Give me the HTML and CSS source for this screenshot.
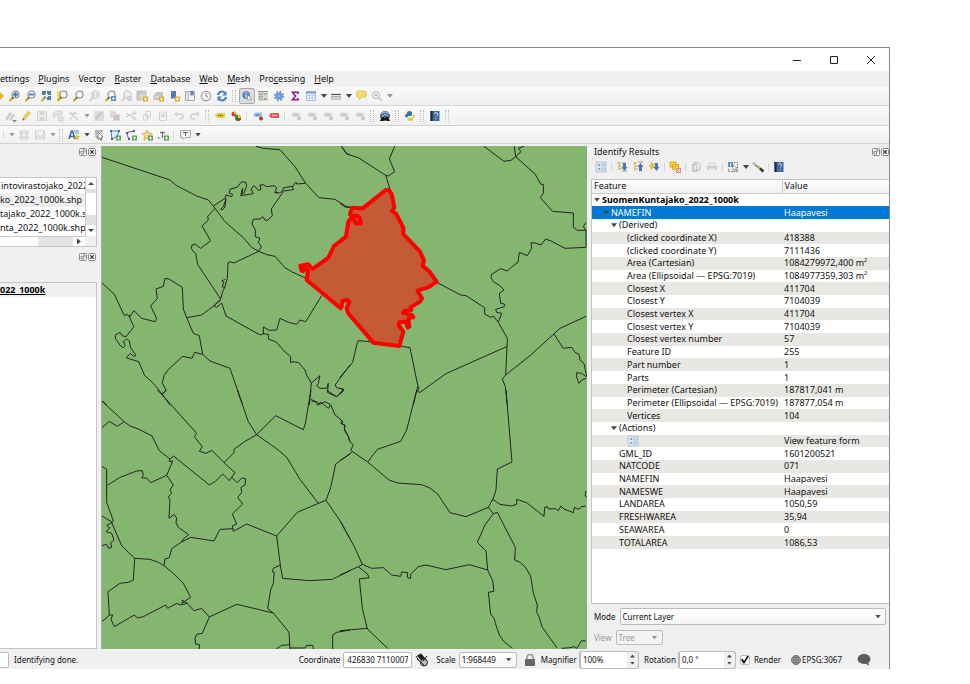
FILE: index.html
```html
<!DOCTYPE html>
<html lang="en">
<head>
<meta charset="utf-8">
<title>QGIS</title>
<link rel="stylesheet" href="styles.css">
</head>
<body>
<svg class="sprite" aria-hidden="true">
  <symbol id="lens" viewBox="0 0 16 16"><path d="M7 9.5 3.5 13" stroke="#c9a51c" stroke-width="2"/><path d="M7.5 9 6 10.5" stroke="#444" stroke-width="1.6"/><circle cx="9.5" cy="6.5" r="3.5" fill="#f3f5f7" stroke="#888" stroke-width="1.1"/></symbol>
  <symbol id="lens-off" viewBox="0 0 16 16"><path d="M7 9.5 3.5 13" stroke="#d3cfc4" stroke-width="2"/><circle cx="9.5" cy="6.5" r="3.5" fill="#f1f1f1" stroke="#c6c6c6" stroke-width="1.1"/></symbol>
  <symbol id="pan" viewBox="0 0 16 16"><path d="M6 8 9 5v6z" fill="#4a7ab5"/><path d="M14 8 10 4v2.5H7v3h3V12z" fill="#e6b422"/></symbol>
  <symbol id="zin" viewBox="0 0 16 16"><use href="#lens"/><path d="M7 6.5h5M9.5 4v5" stroke="#4d78ad" stroke-width="1.8"/></symbol>
  <symbol id="zout" viewBox="0 0 16 16"><use href="#lens"/><path d="M7 6.5h5" stroke="#4d78ad" stroke-width="1.8"/></symbol>
  <symbol id="full" viewBox="0 0 16 16"><path d="M7 9.5 3.5 13" stroke="#c9a51c" stroke-width="2"/><path d="M4 3h4v4H4zM9 3h4v4H9zM9 8h4v4H9zM6 8h2v2H6z" fill="#5079a8"/><circle cx="8.5" cy="7.5" r="2" fill="#dfe7ef"/></symbol>
  <symbol id="zsel" viewBox="0 0 16 16"><path d="M3 3h7v8H3z" fill="#f4de55"/><use href="#lens"/></symbol>
  <symbol id="z11" viewBox="0 0 16 16"><use href="#lens-off"/><path d="M8 5v3m3-3v3" stroke="#bbb"/></symbol>
  <symbol id="zlast" viewBox="0 0 16 16"><use href="#lens"/><path d="M9 8h5v5H9z" fill="#5c8bc4"/><path d="M13 10.5h-3m1.5-1.5v3" stroke="#fff"/></symbol>
  <symbol id="znext" viewBox="0 0 16 16"><use href="#lens-off"/><path d="M9 8h5v5H9z" fill="#d4d4d4"/></symbol>
  <symbol id="plus" viewBox="0 0 16 16"><path d="M9 8.5h5v5H9z" fill="#d8b021"/><path d="M10 11h3m-1.5-1.5v3" stroke="#fff"/></symbol>
  <symbol id="map" viewBox="0 0 16 16"><path d="M3 3h9v9H3z" fill="#d9d8d4" stroke="#bbb"/><path d="M5 3v9M3 5h9" stroke="#bbb"/><use href="#plus"/></symbol>
  <symbol id="map3d" viewBox="0 0 16 16"><path d="m3 9 3-5h7v5l-3 3H4z" fill="#c6c5c1"/><path d="M5 9h6" stroke="#eee"/><use href="#plus"/></symbol>
  <symbol id="bookmark" viewBox="0 0 16 16"><path d="M5 3h5v9l-2.500-2L5 11z" fill="#4f7eb5"/><use href="#plus"/></symbol>
  <symbol id="bookmarks" viewBox="0 0 16 16"><path d="M3.500 3.500h9v9h-9z" fill="#f1f1f1" stroke="#aaa"/><path d="M6 3v9" stroke="#aaa"/><path d="M8.500 3h3v5L10 7 8.500 8z" fill="#5780ad"/></symbol>
  <symbol id="clock" viewBox="0 0 16 16"><circle cx="8" cy="8" r="4.600" fill="#f5f5f5" stroke="#999" stroke-width="1.100"/><path d="M8 5v3l2 1" stroke="#888" fill="none"/></symbol>
  <symbol id="refresh" viewBox="0 0 16 16"><path d="M4 7a4 4 0 0 1 7-2M12 9a4 4 0 0 1-7 2" fill="none" stroke="#4383c4" stroke-width="2"/><path d="M12.500 3v4.500H8zM3.500 13V8.500H8z" fill="#4383c4"/></symbol>
  <symbol id="identify" viewBox="0 0 16 16"><circle cx="7" cy="7" r="4.300" fill="#5587be"/><path d="M7 6.500V10M7 4v1.300" stroke="#fff" stroke-width="1.300"/><path d="m8.500 7 5 3.500-2 .5 1.500 2-1 .7-1.500-2-1.500 1.500z" fill="#fff" stroke="#777" stroke-width=".6"/></symbol>
  <symbol id="abacus" viewBox="0 0 16 16"><path d="M3 3h10v10H3z" fill="#d9d9d6"/><path d="M3 3.500h10" stroke="#8d8d8d"/><path d="M4 6h4m1 5h3" stroke="#cf7070" stroke-width="1.500" stroke-dasharray="1.500 .7"/><path d="M4 8.500h4m1-2.500h3M4 11h4" stroke="#6fa67a" stroke-width="1.500" stroke-dasharray="1.500 .7"/></symbol>
  <symbol id="gear" viewBox="0 0 16 16"><circle cx="8" cy="8" r="4.200" fill="none" stroke="#6c98c9" stroke-width="2" stroke-dasharray="1.800 1.500"/><circle cx="8" cy="8" r="3.600" fill="#6f9ccd"/><circle cx="8" cy="8" r="1.200" fill="#8fb3da"/></symbol>
  <symbol id="sigma" viewBox="0 0 16 16"><path d="M11 6V4.200H5.500L8.500 8l-3 3.800H11V10" fill="none" stroke="#94158f" stroke-width="1.600"/></symbol>
  <symbol id="table" viewBox="0 0 16 16"><path d="M3.500 3.500h9v9h-9z" fill="#eef4fa" stroke="#a9c1db"/><path d="M3 4.500h10" stroke="#6e9bcc" stroke-width="2"/><path d="M6.500 4v8M9.500 4v8M3 7.500h10M3 10h10" stroke="#b3c8df" stroke-width=".8"/></symbol>
  <symbol id="ruler" viewBox="0 0 16 16"><path d="M3 6.500h10" stroke="#555" stroke-width="1.200"/><path d="M3.500 8.500h9V11h-9z" fill="#ddd" stroke="#aaa"/></symbol>
  <symbol id="tip" viewBox="0 0 16 16"><path d="M4 3h8q1.500 0 1.500 1.500v3Q13.500 9 12 9H9l-3 3 .5-3H4.500Q3.500 9 3.500 7.500v-3Q3.500 3 5 3z" fill="#f1da6d" stroke="#d9bf55" stroke-width=".7"/></symbol>
  <symbol id="lensgear" viewBox="0 0 16 16"><circle cx="7" cy="7" r="3.500" fill="#eee" stroke="#ccc" stroke-width="1.500"/><circle cx="7" cy="7" r="1.300" fill="#bbb"/><path d="m9.500 9.500 3 3" stroke="#ccc" stroke-width="2"/></symbol>
  <symbol id="pencils" viewBox="0 0 16 16"><path d="m3 11 5-7 2 1.500-5 7zM7 12l4-6 2 1.500-4 5z" fill="#c9c9c9"/><path d="M10 12h5l-2.500 2.500z" fill="#888"/></symbol>
  <symbol id="pencil" viewBox="0 0 16 16"><path d="m4.500 12.500.8-3.300 5-6 2.200 1.800-5 6z" fill="#ead35f" stroke="#c4ad48" stroke-width=".6"/><path d="m4.500 12.500.5-2 1.500 1z" fill="#555"/></symbol>
  <symbol id="save-off" viewBox="0 0 16 16"><path d="M3.500 3.500h9v9h-9z" fill="#eee" stroke="#d2d2d2"/><path d="M5.500 4h5v3h-5zm0 5h5v3.500h-5z" fill="#d5d5d5"/></symbol>
  <symbol id="poly-off" viewBox="0 0 16 16"><path d="m3 6 3-3h6v4H7l-3 3zM8 9h5v4H8z" fill="#e4e4e4" stroke="#d0d0d0"/></symbol>
  <symbol id="node-off" viewBox="0 0 16 16"><path d="m4 12 5-8M4 4l8 8M3 5.500h9" stroke="#cfcfcf" stroke-width="1.200"/></symbol>
  <symbol id="edit-off" viewBox="0 0 16 16"><path d="M3 3h10v10H3z" fill="#dedddb"/><path d="m5 11 6-7" stroke="#c9c6be" stroke-width="2"/></symbol>
  <symbol id="trash-off" viewBox="0 0 16 16"><path d="M3 3h6v3h4v7H6v-3H3z" fill="#ddd7d6"/><path d="M7 7h5v5H7z" fill="#cbc2c0"/></symbol>
  <symbol id="cut-off" viewBox="0 0 16 16"><path d="m3 5 8 5M3 9l8-4" stroke="#c9c9c9"/><circle cx="11.500" cy="10.500" r="1.300" fill="none" stroke="#c9c9c9"/><circle cx="11.500" cy="5" r="1.300" fill="none" stroke="#c9c9c9"/></symbol>
  <symbol id="copy-off" viewBox="0 0 16 16"><path d="M7 3.500h4.500V9H7zM4.500 6.500H9V12H4.500z" fill="#f4f4f4" stroke="#d2d2d2"/></symbol>
  <symbol id="paste-off" viewBox="0 0 16 16"><path d="M4.500 4h7v8.500h-7z" fill="#f4f4f4" stroke="#d2d2d2"/><path d="M6 6h4v3H6z" fill="#d5d5d5"/></symbol>
  <symbol id="undo-off" viewBox="0 0 16 16"><path d="M5 6h4.500a2.500 2.500 0 0 1 0 5H8" fill="none" stroke="#d2d2d2" stroke-width="1.600"/><path d="M6.500 3v6L3 6z" fill="#d2d2d2"/></symbol>
  <symbol id="redo-off" viewBox="0 0 16 16"><path d="M11 6H6.500a2.500 2.500 0 0 0 0 5H8" fill="none" stroke="#d2d2d2" stroke-width="1.600"/><path d="M9.500 3v6L13 6z" fill="#d2d2d2"/></symbol>
  <symbol id="label" viewBox="0 0 16 16"><path d="m3 7.500 2-2.500h8v5H5z" fill="#f2d23a"/><path d="M6 7.500h5" stroke="#7b6820" stroke-width="1.500" stroke-dasharray="1.300 .5"/></symbol>
  <symbol id="diagram" viewBox="0 0 16 16"><circle cx="6" cy="6" r="2.500" fill="#e63a24"/><path d="M6 6V3.500A2.500 2.500 0 0 1 8.500 6z" fill="#f2cf2e"/><circle cx="10" cy="10" r="3" fill="#24852e"/><path d="M10 10V7a3 3 0 0 1 3 3z" fill="#f2cf2e"/><path d="m10 10 3 0a3 3 0 0 1-2 3z" fill="#d22"/></symbol>
  <symbol id="label-pin" viewBox="0 0 16 16"><path d="m3 7 2-2.500h7v4.500H5z" fill="#a4c1e4"/><path d="M5.500 7h4" stroke="#46658d"/><circle cx="11" cy="10.500" r="2" fill="#bd3333"/></symbol>
  <symbol id="label-red" viewBox="0 0 16 16"><path d="m3 7.500 2-2.500h8v5H5z" fill="#f0514f"/><path d="M6 7.500h5" stroke="#ffd9d9" stroke-width="1.500" stroke-dasharray="1.300 .5"/></symbol>
  <symbol id="label-off" viewBox="0 0 16 16"><path d="m3 7 2-2.500h7v4.500H5z" fill="#dcdad6"/><path d="M5.500 7h4" stroke="#b8b8b8"/><circle cx="11" cy="10.500" r="2" fill="#c9c7c3"/></symbol>
  <symbol id="globe-dark" viewBox="0 0 16 16"><circle cx="8" cy="8" r="5" fill="#4b678c"/><path d="M4 6q4-4 8 0M5 9l3-3 3 2" fill="none" stroke="#b5c9de"/><path d="m3 13 2-4h2l1 2 1-2h2l2 4h-3l-1-1H8l-2 1z" fill="#171717"/></symbol>
  <symbol id="python" viewBox="0 0 16 16"><path d="M5 6V4.500Q5 3 7.500 3T10 4.500V7Q10 8 9 8H6.500Q5.500 8 5.500 9.500H4.500Q3 9.500 3 7.500T5 6z" fill="#3b73a8"/><path d="M11 6.500v1.500q0 1.500-1.500 1.500H7q-1 0-1 1v1Q6 13 8.500 13T11 11.500V10q2 0 2-2t-2-1.500z" fill="#f0c93a"/></symbol>
  <symbol id="help" viewBox="0 0 16 16"><path d="M3.500 3h9v10h-9z" fill="#416a9b"/><path d="M3.500 3h2v10h-2z" fill="#172538"/><path d="M7.500 6q0-1.500 1.500-1.500T10.500 6 9 8.500M9 10v1.200" stroke="#c9d9ea" fill="none"/></symbol>
  <symbol id="grid-off" viewBox="0 0 16 16"><path d="M4 4h3v3H4zM9 4h3v3H9zM4 9h3v3H4zM9 9h3v3H9z" fill="#e6e6e6" stroke="#cfcfcf"/></symbol>
  <symbol id="mesh-off" viewBox="0 0 16 16"><path d="M3.500 4h9v8h-9zl5 7 4-7M3.500 12l3-4m3 0 3 4" fill="none" stroke="#cfcfcf"/></symbol>
  <symbol id="annot" viewBox="0 0 16 16"><path d="m3 12 2.500-8h1L9 12M4 9.500h4" stroke="#35659b" stroke-width="1.500" fill="none"/><path d="M8 4h5M9 6h4" stroke="#5b88ba"/><path d="m11 7 1 2 2 .3-1.500 1.500.5 2.200-2-1-2 1 .5-2.200L8 9.300 10 9z" fill="#e3ba30"/></symbol>
  <symbol id="select" viewBox="0 0 16 16"><path d="M4 4h8M5 4v6M5 10h2M10 3v3" fill="none" stroke="#888"/><path d="m7 5 5 5-2 .3 1 2.500-1.200.5-1-2.300L7 12.500z" fill="#fff" stroke="#555" stroke-width=".8"/></symbol>
  <symbol id="gplus" viewBox="0 0 16 16"><path d="M9 8.500h5v5H9z" fill="#5b9d59"/><path d="M10 11h3m-1.500-1.500v3" stroke="#fff"/></symbol>
  <symbol id="apoly" viewBox="0 0 16 16"><path d="M4 4h8L10 9l-5 3z" fill="#e5eff8" stroke="#5580ae"/><path d="M3 3h2v2H3zM11 3h2v2h-2zM4 11h2v2H4z" fill="#2668b5"/><use href="#gplus"/></symbol>
  <symbol id="aline" viewBox="0 0 16 16"><path d="M12 4 5 5q-2 3 1 7" fill="none" stroke="#666"/><path d="M10 3h2v2h-2zM3 5h2v2H3zM5 11h2v2H5z" fill="#2668b5"/><use href="#gplus"/></symbol>
  <symbol id="astar" viewBox="0 0 16 16"><path d="m8 3 1.500 3 3.500.5L10.500 9l.5 4-3-2-3 2 .5-4L3 6.500 6.500 6z" fill="#f6dc83" stroke="#d9a33c" stroke-width=".8"/><use href="#gplus"/></symbol>
  <symbol id="atext" viewBox="0 0 16 16"><path d="M5 5.500h5M7.500 5.500V11M3 11h1.500" stroke="#777" stroke-width="1.300"/><use href="#gplus"/></symbol>
  <symbol id="atip" viewBox="0 0 16 16"><path d="M3.500 3.500h10v7H8l-2 2v-2H3.500z" fill="#edf1f5" stroke="#aaa"/><path d="M6 5.500h5m-2.500 0V9" stroke="#666" fill="none"/></symbol>
  <symbol id="form" viewBox="0 0 16 16"><path d="M3 3h10v10H3z" fill="#dfe9f3" stroke="#b3c5d8"/><path d="M5 6h2m-2 4h2" stroke="#567"/><path d="M8.500 5h3v2h-3zm0 4h3v2h-3z" fill="#fff" stroke="#8dadcf" stroke-width=".8"/></symbol>
  <symbol id="expand" viewBox="0 0 16 16"><path d="M3 4h4M4.500 7H8M4.500 10H8M5 3v8" stroke="#d3b450" stroke-width="1.200"/><path d="M8 4h4M8 12h5" stroke="#999"/><path d="M9 4h3v4h1.500L10.500 12l-3-4H9z" fill="#4777ae"/></symbol>
  <symbol id="collapse" viewBox="0 0 16 16"><path d="M3 4h4M4.500 7H8M4.500 10H8M5 3v9" stroke="#d3b450" stroke-width="1.200"/><path d="M8 3h5" stroke="#999"/><path d="M9 12h3V8h1.500L10.500 4l-3 4H9z" fill="#4777ae"/></symbol>
  <symbol id="expnew" viewBox="0 0 16 16"><path d="m5.500 3 1 2 2-.5L7.500 7 9 9l-2.500-.5L5 11V8L3 7l2-1z" fill="#f0bd20" stroke="#e2b53a" stroke-width=".8"/><path d="M9 4h3v4h1.500L10.500 12l-3-4H9z" fill="#4777ae"/></symbol>
  <symbol id="clear" viewBox="0 0 16 16"><path d="M3 3h6v5H3zM5.500 5.500h6v5h-6z" fill="#f5d43c" stroke="#dbb01d"/><path d="M9 9h5v5H9z" fill="#dc8a82"/><path d="m10 10 3 3m0-3-3 3" stroke="#fff"/></symbol>
  <symbol id="copy" viewBox="0 0 16 16"><path d="M6 3.500h4l2 2V11H6zM4.500 5.500H9V12.500H4.500z" fill="#f3f3f3" stroke="#aaa" stroke-width=".8"/></symbol>
  <symbol id="print" viewBox="0 0 16 16"><path d="M5 4h6v3H5z" fill="#eee" stroke="#d0d0d0"/><path d="M4 7h8q1 0 1 1v3H3V8q0-1 1-1z" fill="#cfcfcf"/><path d="M5 9.500h6v3H5z" fill="#eee"/></symbol>
  <symbol id="idsel" viewBox="0 0 16 16"><path d="M3 3h5v5H3z" fill="#5b8cc2"/><path d="M5.500 4v3.500" stroke="#fff"/><path d="M9 3.500h3.500v9h-9V9" fill="none" stroke="#777" stroke-dasharray="1.500 1"/><path d="m8 6 4 3-1.500.5 1 2-1 .5-1-2L8 11.500z" fill="#fff" stroke="#777" stroke-width=".7"/></symbol>
  <symbol id="wrench" viewBox="0 0 16 16"><path d="m4 5 4 3" stroke="#888" stroke-width="1.600"/><circle cx="4" cy="4.500" r="1.600" fill="#bbb"/><path d="m7.500 7.500 3 2.500" stroke="#c3b14c" stroke-width="2.600"/><path d="m10 9.500 3.500 3" stroke="#333" stroke-width="2.400"/></symbol>
  <symbol id="float" viewBox="0 0 8 8"><rect x=".5" y=".5" width="7" height="7" rx="1" fill="#f8f8f8" stroke="#888"/><path d="M3.500 2h2.500v2.500M2 3.500h2.500V6H2z" fill="none" stroke="#666" stroke-width=".7"/></symbol>
  <symbol id="close" viewBox="0 0 8 8"><rect x=".5" y=".5" width="7" height="7" rx="1" fill="#f8f8f8" stroke="#888"/><path d="m2.200 2.200 3.600 3.600m0-3.600L2.200 5.800" stroke="#333" stroke-width="1.200"/></symbol>
</svg>

<div class="window">
  <header class="titlebar">
    <button aria-label="Minimize"><svg viewBox="0 0 10 10"><path d="M1 5.500h8"/></svg></button>
    <button aria-label="Maximize"><svg viewBox="0 0 10 10"><path d="M1.500 1.500h7v7h-7z"/></svg></button>
    <button aria-label="Close window"><svg viewBox="0 0 10 10"><path d="m1 1 8 8m0-8L1 9"/></svg></button>
  </header>

  <nav class="menubar">
    <button>ettings</button><button><u>P</u>lugins</button><button>Vect<u>o</u>r</button><button><u>R</u>aster</button><button><u>D</u>atabase</button><button><u>W</u>eb</button><button><u>M</u>esh</button><button>Pro<u>c</u>essing</button><button><u>H</u>elp</button>
  </nav>

  <div class="toolbar first">
    <button aria-label="Pan"><svg><use href="#pan"/></svg></button>
    <button aria-label="Zoom in"><svg><use href="#zin"/></svg></button>
    <button aria-label="Zoom out"><svg><use href="#zout"/></svg></button>
    <button aria-label="Zoom full"><svg><use href="#full"/></svg></button>
    <button aria-label="Zoom to selection"><svg><use href="#zsel"/></svg></button>
    <button aria-label="Zoom to layer"><svg><use href="#lens"/></svg></button>
    <button aria-label="Native resolution"><svg><use href="#z11"/></svg></button>
    <button aria-label="Zoom last"><svg><use href="#zlast"/></svg></button>
    <button aria-label="Zoom next"><svg><use href="#znext"/></svg></button>
    <button aria-label="New map view"><svg><use href="#map"/></svg></button>
    <button aria-label="New 3D map view"><svg><use href="#map3d"/></svg></button>
    <button aria-label="New bookmark"><svg><use href="#bookmark"/></svg></button>
    <button aria-label="Show bookmarks"><svg><use href="#bookmarks"/></svg></button>
    <button aria-label="Temporal controller"><svg><use href="#clock"/></svg></button>
    <button aria-label="Refresh"><svg><use href="#refresh"/></svg></button>
    <i class="handle"></i>
    <button class="on" aria-label="Identify features"><svg><use href="#identify"/></svg></button>
    <button aria-label="Field calculator"><svg><use href="#abacus"/></svg></button>
    <button aria-label="Toolbox"><svg><use href="#gear"/></svg></button>
    <button aria-label="Statistics"><svg><use href="#sigma"/></svg></button>
    <button aria-label="Attribute table"><svg><use href="#table"/></svg></button><i class="drop"></i>
    <button aria-label="Measure"><svg><use href="#ruler"/></svg></button><i class="drop"></i>
    <button aria-label="Map tips"><svg><use href="#tip"/></svg></button>
    <button aria-label="Feature action"><svg><use href="#lensgear"/></svg></button><i class="drop off"></i>
  </div>

  <div class="toolbar second">
    <button aria-label="Current edits"><svg><use href="#pencils"/></svg></button>
    <button aria-label="Toggle editing"><svg><use href="#pencil"/></svg></button>
    <button aria-label="Save edits"><svg><use href="#save-off"/></svg></button>
    <button aria-label="Add feature"><svg><use href="#poly-off"/></svg></button>
    <button aria-label="Vertex tool"><svg><use href="#node-off"/></svg></button><i class="drop off"></i>
    <button aria-label="Modify attributes"><svg><use href="#edit-off"/></svg></button>
    <button aria-label="Delete selected"><svg><use href="#trash-off"/></svg></button>
    <button aria-label="Cut"><svg><use href="#cut-off"/></svg></button>
    <button aria-label="Copy"><svg><use href="#copy-off"/></svg></button>
    <button aria-label="Paste"><svg><use href="#paste-off"/></svg></button>
    <button aria-label="Undo"><svg><use href="#undo-off"/></svg></button>
    <button aria-label="Redo"><svg><use href="#redo-off"/></svg></button>
    <i class="handle"></i>
    <button aria-label="Labeling options"><svg><use href="#label"/></svg></button>
    <button aria-label="Diagram options"><svg><use href="#diagram"/></svg></button>
    <i class="sep"></i>
    <button aria-label="Highlight pinned"><svg><use href="#label-pin"/></svg></button>
    <button aria-label="Unplaced labels"><svg><use href="#label-red"/></svg></button>
    <i class="sep"></i>
    <button aria-label="Pin labels"><svg><use href="#label-off"/></svg></button>
    <button aria-label="Show labels"><svg><use href="#label-off"/></svg></button>
    <button aria-label="Move label"><svg><use href="#label-off"/></svg></button>
    <button aria-label="Rotate label"><svg><use href="#label-off"/></svg></button>
    <button aria-label="Change label"><svg><use href="#label-off"/></svg></button>
    <i class="handle"></i>
    <button aria-label="MetaSearch"><svg><use href="#globe-dark"/></svg></button>
    <i class="handle"></i>
    <button aria-label="Python console"><svg><use href="#python"/></svg></button>
    <i class="handle"></i>
    <button aria-label="Help contents"><svg><use href="#help"/></svg></button>
    <i class="handle"></i>
  </div>

  <div class="toolbar third">
    <i class="sep"></i><i class="drop off"></i>
    <button aria-label="Tiles"><svg><use href="#grid-off"/></svg></button>
    <button aria-label="Mesh digitizing"><svg><use href="#mesh-off"/></svg></button><i class="drop off"></i>
    <i class="handle"></i>
    <button aria-label="New annotation layer"><svg><use href="#annot"/></svg></button><i class="drop"></i>
    <button aria-label="Modify annotations"><svg><use href="#select"/></svg></button>
    <button aria-label="Polygon annotation"><svg><use href="#apoly"/></svg></button>
    <button aria-label="Line annotation"><svg><use href="#aline"/></svg></button>
    <button aria-label="Marker annotation"><svg><use href="#astar"/></svg></button>
    <button aria-label="Text annotation"><svg><use href="#atext"/></svg></button>
    <i class="sep"></i>
    <button aria-label="Text balloon"><svg><use href="#atip"/></svg></button><i class="drop"></i>
  </div>

  <main class="work">
    <aside class="left">
      <div class="dockhead"><button aria-label="Float browser"><svg><use href="#float"/></svg></button><button aria-label="Close browser"><svg><use href="#close"/></svg></button></div>
      <div class="browser">
        <ul class="files"><li class="indent">intovirastojako_2022</li><li class="picked">ko_2022_1000k.shp</li><li>tajako_2022_1000k.shp</li><li>nta_2022_1000k.shp</li></ul>
        <div class="vbar"><i class="up"></i><i class="vthumb"></i><i class="down"></i></div>
        <div class="hbar"><i class="hthumb"></i><i class="next"></i></div>
        <div class="corner"></div>
      </div>
      <div class="dockhead lower"><button aria-label="Float layers"><svg><use href="#float"/></svg></button><button aria-label="Close layers"><svg><use href="#close"/></svg></button></div>
      <ul class="layers"><li>022_1000k</li></ul>
    </aside>

    <svg class="canvas" viewBox="102 146 485 503" preserveAspectRatio="xMidYMid slice" role="img" aria-label="Municipality map">
      <g class="border" transform="translate(100 145) scale(.33333)">
        <path d="M0 35 210 105 230 122 290 153 325 165 340 183 375 230 430 278 455 307 476 319 500 329 525 334 555 368 575 380 618 400M468 4 490 10 540 14 585 65 617 115 657 158 705 163 738 184 750 187M724 4 742 28 750 28"/>
        <path d="M340 183 375 160 378 150 395 155 398 148 388 144 390 133 412 126 425 110 438 112 440 122 432 145 426 147 428 130 422 152 460 146 453 132 462 122 475 136 483 134 480 120 490 119 500 125 522 122 530 128 526 138 533 144 524 142 538 144 548 138 550 128 578 124 580 134 550 138M578 124 588 111 590 117 617 115"/>
        <path d="M345 190 323 215 325 225 306 243 332 287 302 310 285 297 276 301 274 310 280 320 287 325 293 358 362 462M378 162 370 185 362 193 368 194 375 186 378 160M550 140 514 192 517 212 503 226 495 225 488 215 480 222 460 223 456 237 466 255 466 275 480 280 475 292 484 305 476 319"/>
        <path d="M476 319 402 354 390 350 384 354 382 400 375 425 368 440 362 462 342 482 305 510 260 518 280 565 298 572 308 628 284 622 276 640 248 634 205 674 192 692 190 703 186 713 198 735 186 747 210 780M376 403 365 408 372 412 366 425 376 428"/>
        <path d="M0 408 43 448 73 512 82 508 88 516 102 497 125 520 165 530 170 520 152 483 172 460 168 432 190 424 195 400 207 402 247 427 250 492 260 518M88 510 92 525 102 545 78 575 68 573 60 562 46 570 46 580 62 603 70 608 76 602 70 590 80 582 88 588 92 608 108 632 100 634 92 625 78 638 116 650 134 692 150 705 160 715 186 747M0 762 20 780"/>
        <path d="M308 628 330 648 390 670 428 780M362 465 342 482 350 487 365 474 378 513 475 567 482 570 490 566 505 568 505 582 530 592 552 618 572 635 572 653 580 650 596 653 615 675 620 690 634 714 628 780M665 452 617 530 600 525 590 538 565 532 540 520 530 555 508 556 490 546 490 568"/>
        <path d="M634 714 660 692 655 715 650 722 660 730 680 730 685 715 683 738 710 755 732 733 710 728 705 720 720 700 750 660M634 768 650 770 660 778 675 770 690 778"/>
      </g>
      <g class="border" transform="translate(340 145) scale(.33333)">
        <path d="M5 4 20 27 55 38 137 91 150 133M164 4 148 42 164 80 145 93 137 91M0 175 15 186 35 188M432 4 492 49 513 46 527 35 523 4M527 35 543 20 535 10 552 4M527 35 585 87 603 118 610 118 610 145 601 158 638 199 700 204 700 247 712 256 738 256 730 245 738 233M738 256V307"/>
        <path d="M738 307 675 310 633 288 617 282 603 300 585 294 573 293 575 310 562 332 538 322 534 352 520 362 502 378 482 371 455 388 453 398 460 410 480 422 492 435 478 445 482 475 493 477 493 485 467 493 470 502 485 505 475 532M290 412 362 450 378 452 434 488 434 507 452 517 460 513 475 532 502 580 497 690 487 702 496 725 502 780"/>
        <path d="M502 604 318 686 240 742 232 740 237 730 233 720 210 608 178 603M233 725 220 780M738 514 660 550 570 632 497 690M642 567 670 610 695 607 705 622 717 628 720 645 732 655 740 695M738 695 725 685 710 683 710 697 717 715 725 705 738 700M100 591 55 587 50 600 38 652 0 697M0 730 12 735 0 748"/>
      </g>
      <g class="border" transform="translate(100 390) scale(.33333)">
        <path d="M0 28 75 97 90 108 115 117 156 138 178 182 210 207 220 198 228 204 328 285 345 275 368 252 388 272 405 248 372 218 402 188 402 178 435 154 470 134 527 77 610 119 616 100 633 0M172 0 186 14 290 130 283 140 307 170 298 184 318 190 336 181 372 218M186 14 200 0"/>
        <path d="M412 0 445 95 470 134 535 180 560 202 600 268 655 340 678 331 692 293 707 222 750 192M395 262 412 278 425 264 437 266 435 285 423 292 425 308 413 322 428 342 397 372 410 402 397 408 400 424 440 402 530 438 592 367 655 340M400 416 360 418 342 453 272 442 245 456 215 476 208 503 195 507 192 527"/>
        <path d="M210 207 208 215 218 213 208 237 200 256 220 285 210 300 215 310 205 320 210 330 207 385 222 373 230 384 228 398 235 412 266 434 250 447 245 456M200 256 152 278 140 264 125 264 130 256 127 242 110 243 60 262 22 286M0 226 20 238 20 337 40 392 35 398 65 467 104 505 150 508 175 517 192 527 220 550 250 580 272 622 245 640 250 633 245 630 262 640 282 662 305 655 328 681 307 730 290 733 285 745 287 762 298 764 298 778"/>
        <path d="M0 118 28 94 52 109 72 95M0 374 37 397 20 406 30 414 18 425 35 430 42 450 32 458 35 472 26 475 20 463 0 468M104 505 100 570 85 577 60 580 24 605 28 675 12 690 0 697M28 675 38 675 33 688 43 710 103 675 112 684 130 680 197 645 203 655 230 640 240 645 262 640"/>
        <path d="M328 681 410 643 520 669 503 656 512 600 520 580 523 547 517 545 520 535 541 525M530 438 541 525 548 565 628 572 697 568 750 542M520 669 567 727 570 778M528 778 545 766 570 764M570 774H615L620 766H638L641 778M678 331 720 392 750 446M698 778V735L710 727 750 720M633 28 645 34 654 46 662 36 685 55 692 44 705 75 722 88 728 95 722 98 735 107 733 115 745 140 750 155M683 0V8L710 20 730 0"/>
      </g>
      <g class="border" transform="translate(340 390) scale(.33333)">
        <path d="M0 88 8 94 5 102 15 105 13 120 25 140 30 155 40 165 32 180 38 185 83 216 147 270 172 279 245 284 270 294 293 312 330 368 378 380 445 352 460 325 468 300 472 237 516 216 498 0M230 0 200 120 182 154 112 178 83 216M0 212 38 185M458 328 480 343 515 348 530 343 530 328 560 338 612 379 614 352 623 350 625 357 647 356 655 362 663 348 672 357 700 368 703 352 715 358 725 350 738 348M738 303 735 315 740 322"/>
        <path d="M445 352 460 371 472 367 526 472 524 510 540 517 555 530 572 558 580 610 592 645 590 668 597 680 607 712 652 775M460 371 435 405 412 457 438 483 443 540 458 572 462 604 445 607 452 672 463 687 466 700 478 735 490 753 517 775M443 540 388 524 318 539 258 525 235 530 212 552 212 566 202 562 203 548 185 546 182 559 155 555 130 533 95 535 67 523 43 470 0 392M67 523 55 530 0 555M55 530 82 552 88 563 58 567 67 655 82 717 143 775M82 715 0 722M665 775 690 773 702 770 710 775 725 752 738 753"/>
      </g>
      <path class="picked-area" transform="translate(340 145) scale(.33333)" d="M137 135 146 135 155 147 163 187 156 198 168 206 190 248 190 267 240 320 252 347 248 362 270 382 290 410 265 427 232 437 246 460 240 470 212 487 214 495 192 499 190 504 214 509 220 516 205 520 208 545 203 547 197 530 178 532 176 540 190 560 178 603 100 593 25 505 20 490 28 470 22 465 8 468 5 485 2 490-100 405-96 378-105 366-110 378-115 377-119 362-95 358-82 372-35 338-18 303 18 275 25 230 38 214 50 212 60 220 62 235 48 235 40 222 30 208 36 188 68 190z"/>
    </svg>

    <aside class="right">
      <div class="righthead"><h2>Identify Results</h2><button aria-label="Float results"><svg><use href="#float"/></svg></button><button aria-label="Close results"><svg><use href="#close"/></svg></button></div>
      <div class="toolbar results">
        <button aria-label="Form view"><svg><use href="#form"/></svg></button><i class="sep"></i>
        <button aria-label="Expand tree"><svg><use href="#expand"/></svg></button>
        <button aria-label="Collapse tree"><svg><use href="#collapse"/></svg></button>
        <button aria-label="Expand new results"><svg><use href="#expnew"/></svg></button><i class="sep"></i>
        <button aria-label="Clear results"><svg><use href="#clear"/></svg></button><i class="sep"></i>
        <button aria-label="Copy feature"><svg><use href="#copy"/></svg></button>
        <button aria-label="Print response"><svg><use href="#print"/></svg></button><i class="sep"></i>
        <button aria-label="Identify mode"><svg><use href="#idsel"/></svg></button><i class="drop"></i>
        <button aria-label="Identify settings"><svg><use href="#wrench"/></svg></button><i class="sep"></i>
        <button aria-label="Results help"><svg><use href="#help"/></svg></button>
      </div>
      <div class="tree">
        <table>
          <thead><tr><th>Feature</th><th>Value</th></tr></thead>
          <tbody>
            <tr class="l0"><td class="open">SuomenKuntajako_2022_1000k</td><td></td></tr>
            <tr class="l1 chosen"><td class="open">NAMEFIN</td><td>Haapavesi</td></tr>
            <tr class="l2"><td class="open">(Derived)</td><td></td></tr>
            <tr class="l3 alt"><td>(clicked coordinate X)</td><td>418388</td></tr>
            <tr class="l3"><td>(clicked coordinate Y)</td><td>7111436</td></tr>
            <tr class="l3 alt"><td>Area (Cartesian)</td><td>1084279972,400 m²</td></tr>
            <tr class="l3"><td>Area (Ellipsoidal — EPSG:7019)</td><td>1084977359,303 m²</td></tr>
            <tr class="l3 alt"><td>Closest X</td><td>411704</td></tr>
            <tr class="l3"><td>Closest Y</td><td>7104039</td></tr>
            <tr class="l3 alt"><td>Closest vertex X</td><td>411704</td></tr>
            <tr class="l3"><td>Closest vertex Y</td><td>7104039</td></tr>
            <tr class="l3 alt"><td>Closest vertex number</td><td>57</td></tr>
            <tr class="l3"><td>Feature ID</td><td>255</td></tr>
            <tr class="l3 alt"><td>Part number</td><td>1</td></tr>
            <tr class="l3"><td>Parts</td><td>1</td></tr>
            <tr class="l3 alt"><td>Perimeter (Cartesian)</td><td>187817,041 m</td></tr>
            <tr class="l3"><td>Perimeter (Ellipsoidal — EPSG:7019)</td><td>187877,054 m</td></tr>
            <tr class="l3 alt"><td>Vertices</td><td>104</td></tr>
            <tr class="l2"><td class="open">(Actions)</td><td></td></tr>
            <tr class="l3 alt"><td><svg class="formicon" viewBox="2 2 12 12"><use href="#form" width="16" height="16"/></svg></td><td>View feature form</td></tr>
            <tr class="l2"><td>GML_ID</td><td>1601200521</td></tr>
            <tr class="l2 alt"><td>NATCODE</td><td>071</td></tr>
            <tr class="l2"><td>NAMEFIN</td><td>Haapavesi</td></tr>
            <tr class="l2 alt"><td>NAMESWE</td><td>Haapavesi</td></tr>
            <tr class="l2"><td>LANDAREA</td><td>1050,59</td></tr>
            <tr class="l2 alt"><td>FRESHWAREA</td><td>35,94</td></tr>
            <tr class="l2"><td>SEAWAREA</td><td>0</td></tr>
            <tr class="l2 alt"><td>TOTALAREA</td><td>1086,53</td></tr>
          </tbody>
        </table>
      </div>
      <div class="option"><label for="mode">Mode</label><span class="combo wide"><select id="mode"><option>Current Layer</option></select></span></div>
      <div class="option view"><label for="view">View</label><span class="combo"><select id="view" disabled><option>Tree</option></select></span></div>
    </aside>
  </main>

  <footer class="status">
    <input class="locator" aria-label="Locator">
    <output>Identifying done.</output>
    <label for="coord">Coordinate</label><input id="coord" class="coord" value="426830 7110007">
    <svg class="mouse" viewBox="0 0 14 14"><path d="m3 2 6 7M5 1l6 7" stroke="#222" stroke-width="2.500"/><circle cx="9" cy="9.500" r="3.500" fill="#bbb" stroke="#222"/><path d="m2 6 7 6M8 8l4-5M1 3l3 5" stroke="#222" fill="none"/></svg>
    <label for="scale">Scale</label><span class="combo scale"><select id="scale"><option>1:968449</option></select></span>
    <svg class="lock" viewBox="0 0 12 14"><path d="M3 7V4.500a3 3 0 0 1 6 0V7" fill="none" stroke="#999" stroke-width="1.500"/><rect x="1" y="6" width="10" height="7" rx="1" fill="#666"/></svg>
    <label for="mag">Magnifier</label><span class="spin mag"><input id="mag" value="100%"></span>
    <label for="rot">Rotation</label><span class="spin rot"><input id="rot" value="0,0 °"></span>
    <label class="render"><input type="checkbox" checked>Render</label>
    <button class="crs"><svg viewBox="0 0 12 12"><circle cx="6" cy="6" r="4.500" fill="#aaa" stroke="#777"/><path d="M1 6h10M2 3.500h8M2 8.500h8M6 1v10M6 1Q1 6 6 11M6 1q5 5 0 10" fill="none" stroke="#666" stroke-width=".7"/></svg>EPSG:3067</button>
    <button class="messages" aria-label="Messages"><svg viewBox="0 0 14 14"><ellipse cx="7" cy="6" rx="6.500" ry="5" fill="#5c5c5c"/><path d="m8 10 4 3-1-5z" fill="#5c5c5c"/></svg></button>
  </footer>
</div>
</body>
</html>
```

FILE: styles.css
```css
* { box-sizing: border-box; }

body {
  margin: 0;
  padding: 47px 80px 15px 0;
  height: 100vh;
  background: #fff;
  font: 9px/12px "Noto Sans", "Open Sans", sans-serif;
  color: #111;
}

button, input, select { font: inherit; color: inherit; }
button { border: 0; padding: 0; background: none; }
ul { list-style: none; margin: 0; padding: 0; }
.sprite { display: none; }

.window {
  height: 100%;
  display: grid;
  grid-template-rows: 23px 16px 19px 20px 18px minmax(0, 1fr) 20px;
  background: #f0f0f0;
  border-top: 1px solid #888;
  border-right: 1px solid #888;
}

.titlebar {
  display: flex;
  justify-content: flex-end;
  align-items: center;
  gap: 27px;
  padding-right: 13px;
  background: #fff;
}
.titlebar button { width: 10px; height: 10px; }
.titlebar svg { display: block; width: 10px; height: 10px; fill: none; stroke: #222; }

.menubar { display: flex; align-items: center; gap: 9px; white-space: nowrap; }

.toolbar {
  display: flex;
  align-items: center;
  overflow: hidden;
  background: linear-gradient(#fafafa, #f0f0f0);
  border-bottom: 1px solid #d2d2d2;
}
.toolbar button { width: 16px; height: 16px; flex: none; }
.toolbar svg { display: block; width: 16px; height: 16px; fill: none; }
.toolbar .on { background: #dcdcdc; border: 1px solid #aaa; border-radius: 2px; }
.toolbar .on svg { width: 14px; height: 14px; }
.first button:first-child { margin-left: -10px; }
.second { padding-left: 2px; }
.third { padding-left: 1px; }

.handle { flex: none; width: 4px; height: 12px; margin: 0 3px 0 2px; border-left: 1px dotted #bbb; border-right: 1px dotted #bbb; }
.sep { flex: none; width: 1px; height: 8px; margin: 0 3px 0 2px; background: #d4d4d4; }
.drop { flex: none; width: 6px; height: 4px; margin: 0 1px 0 2px; background: #444; clip-path: polygon(0 0, 100% 0, 50% 100%); }
.drop.off { background: #999; }

.work { display: grid; grid-template-columns: 97px minmax(0, 1fr) 298px; min-height: 0; }
.canvas { display: block; width: calc(100% - 8px); height: calc(100% - 2px); margin: 2px 4px 0; background: #85b66f; border-left: 1px solid #aaa; }
.border { fill: none; stroke: #232323; stroke-width: 3; stroke-linejoin: round; }
.picked-area { fill: #c25b36; stroke: #f00; stroke-width: 12; stroke-linejoin: round; }

.left { display: flex; flex-direction: column; min-height: 0; }
.dockhead { display: flex; justify-content: flex-end; gap: 1px; padding: 4px 1px 0 0; height: 33px; flex: none; }
.dockhead.lower { padding-top: 6px; height: 35px; }
.dockhead svg, .righthead svg { display: block; width: 8px; height: 8px; }
.dockhead button, .righthead button { width: 8px; height: 8px; }
.browser {
  display: grid;
  grid-template: minmax(0, 1fr) 10px / minmax(0, 1fr) 11px;
  height: 70px;
  flex: none;
  border: 1px solid #c4c4c4;
  border-left: 0;
  background: #fff;
}
.files { padding-top: 1px; overflow: hidden; line-height: 14px; white-space: nowrap; }
.files li { height: 14px; }
.files .indent { padding-left: 1px; }
.picked { background: #f0f0f0; }
.vbar { display: flex; flex-direction: column; justify-content: space-between; align-items: center; padding: 4px 0; border-left: 1px solid #c8c8c8; }
.vthumb { width: 100%; height: 36px; border: 4px solid #e2e2e2; border-width: 4px 0 10px; }
.up, .down { width: 6px; height: 3px; background: #444; clip-path: polygon(50% 0, 100% 100%, 0 100%); }
.down { clip-path: polygon(0 0, 100% 0, 50% 100%); }
.hbar { display: flex; align-items: center; border-top: 1px solid #c8c8c8; }
.hthumb { flex: 1; height: 100%; margin-left: 38px; margin-right: 4px; background: #e4e4e4; }
.next { width: 4px; height: 6px; margin-right: 4px; background: #444; clip-path: polygon(0 0, 100% 50%, 0 100%); }
.corner { background: #f0f0f0; }
.layers { flex: 1; border: 1px solid #c4c4c4; border-left: 0; background: #fff; }
.layers li { height: 14px; line-height: 14px; background: #f0f0f0; font-weight: bold; text-decoration: underline; color: #000; }

.right { display: flex; flex-direction: column; min-height: 0; }
.righthead { display: flex; align-items: center; gap: 1px; height: 14px; padding: 1px 0 0 3px; margin-bottom: 1px; flex: none; }
.righthead h2 { margin: 0 auto 0 0; font: inherit; }
.results { height: 16px; padding-left: 2px; flex: none; border: 0; background: none; }
.results .sep { margin: 0 2px; }
.tree { flex: 1; min-height: 0; margin-top: 4px; background: #fff; border: 1px solid #c4c4c4; border-right: 0; overflow: hidden; }

table { width: 100%; height: 369px; table-layout: fixed; border-collapse: collapse; white-space: nowrap; }
th { height: 13px; padding: 0 2px; text-align: left; font-weight: normal; background: linear-gradient(#fff, #f0f0f0); border-bottom: 1px solid #ccc; }
th:first-child { width: 190px; border-right: 1px solid #ccc; }
td { padding: 0 2px; line-height: 12px; }
.l0 td:first-child { padding-left: 10px; font-weight: bold; color: #000; }
.l1 td:first-child { padding-left: 19px; }
.l2 td:first-child { padding-left: 27px; }
.l3 td:first-child { padding-left: 35px; }
.open::before { content: ""; display: inline-block; width: 6px; height: 4px; margin: 0 2px 1px -8px; background: #444; clip-path: polygon(0 0, 100% 0, 50% 100%); }
.alt { background: #e9e7e3; }
.chosen { background: #0078d7; color: #fff; }
.formicon { display: block; width: 12px; height: 12px; }

.option { display: flex; align-items: center; gap: 4px; height: 17px; margin: 4px 3px 0 3px; flex: none; font-size: 8px; }
.view { height: 15px; margin: 5px 3px 4px 3px; color: #999; }
.combo { position: relative; display: block; height: 100%; width: 47px; }
.combo.wide { flex: 1; }
.combo select { display: block; width: 100%; height: 100%; padding: 0 2px; appearance: none; background: linear-gradient(#fff, #f5f5f5); border: 1px solid #bbb; border-radius: 2px; }
.combo select:disabled { background: #f3f3f3; opacity: 1; }
.combo::after { content: ""; position: absolute; right: 5px; top: 50%; width: 6px; height: 4px; margin-top: -2px; background: #555; clip-path: polygon(0 0, 100% 0, 50% 100%); }
.view .combo::after { background: #999; }

.status { display: flex; align-items: center; padding: 1px 18px 0 0; font-size: 8px; white-space: nowrap; }
.status input { height: 16px; padding: 0 3px; border: 1px solid #bbb; border-radius: 2px; background: #fff; }
.status .locator { width: 10px; margin-left: -1px; border-left: 0; }
.status output { margin: 0 auto 0 5px; }
.status .coord { width: 69px; margin: 0 3px; }
.mouse { width: 14px; height: 14px; margin-right: 7px; fill: none; }
.status .combo { width: 58px; height: 16px; margin: 0 7px 0 3px; }
.lock { width: 12px; height: 14px; margin-right: 5px; }
.spin { position: relative; margin: 0 6px 0 3px; width: 58px; height: 16px; }
.spin.rot { width: 56px; margin-right: 5px; }
.spin input { display: block; width: 100%; padding: 0 2px; border-right: 11px solid #f0f0f0; box-shadow: 0 0 0 1px #bbb; border-width: 0 11px 0 1px; }
.spin::before, .spin::after { content: ""; position: absolute; right: 3px; width: 5px; height: 3px; background: #444; }
.spin::before { top: 3px; clip-path: polygon(50% 0, 100% 100%, 0 100%); }
.spin::after { bottom: 3px; clip-path: polygon(0 0, 100% 0, 50% 100%); }
.render { display: flex; align-items: center; gap: 4px; margin-right: 9px; }
.status .render input { width: 10px; height: 10px; margin: 0; padding: 0; appearance: none; display: grid; place-items: center; }
.render input:checked::after { content: ""; width: 8px; height: 8px; background: #111; clip-path: polygon(0 50%, 20% 40%, 40% 70%, 80% 0, 100% 10%, 45% 100%, 30% 100%); }
.crs { display: flex; align-items: center; margin-right: 15px; }
.crs svg { width: 12px; height: 12px; }
.messages svg { display: block; width: 14px; height: 14px; }
```
